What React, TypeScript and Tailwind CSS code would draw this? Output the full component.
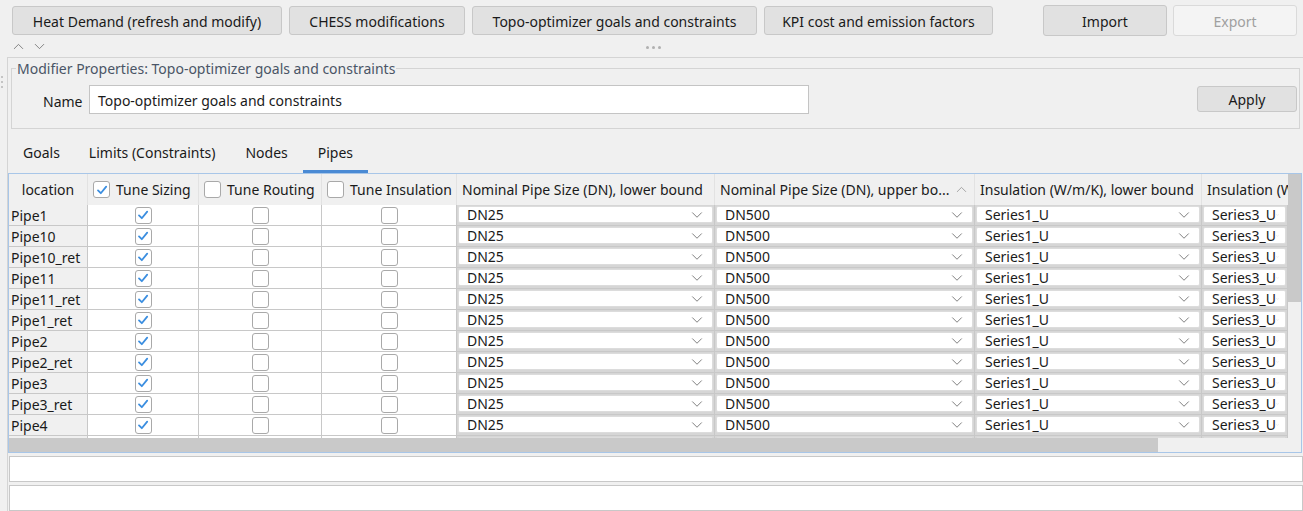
import { ChevronDown, ChevronUp } from 'lucide-react'

const pipes = [
  'Pipe1',
  'Pipe10',
  'Pipe10_ret',
  'Pipe11',
  'Pipe11_ret',
  'Pipe1_ret',
  'Pipe2',
  'Pipe2_ret',
  'Pipe3',
  'Pipe3_ret',
  'Pipe4',
  '',
]

function Check({ checked }: { checked?: boolean }) {
  return (
    <div className="w-[17px] h-[17px] rounded-[3px] border border-[#a9a9a9] bg-white flex items-center justify-center">
      {checked && (
        <svg width="12" height="12" viewBox="0 0 12 12">
          <path d="M2 6.4 L4.8 9.2 L10.2 2.6" fill="none" stroke="#3b8ee0" strokeWidth="1.8" strokeLinecap="round" strokeLinejoin="round" />
        </svg>
      )}
    </div>
  )
}

function Combo({ value, w }: { value: string; w: string }) {
  return (
    <div className={`${w} shrink-0 h-[21px] border-r border-b border-[#c8c8c8] bg-[#d6d6d6] p-[1px] pb-[2px]`}>
      <div className="h-full bg-white rounded-[2px] border border-[#dcdcdc] flex items-center pl-[8px] pr-[6px]">
        <span className="flex-1 leading-none pt-[1px]">{value}</span>
        <ChevronDown size={18} strokeWidth={1} className="text-[#555]" />
      </div>
    </div>
  )
}

function TopButton({ label, w, disabled }: { label: string; w: string; disabled?: boolean }) {
  return (
    <button
      type="button"
      className={`${w} h-[29px] pt-[1px] rounded-[3px] border ${
        disabled ? 'border-[#dadada] bg-[#f4f4f4] text-[#a0a0a0]' : 'border-[#c8c8c8] bg-[#e1e1e1] text-[#1a1a1a]'
      }`}
    >
      {label}
    </button>
  )
}

export default function App() {
  return (
    <div className="w-[1303px] h-[511px] overflow-hidden bg-[#f0f0f0] text-[#1a1a1a] font-['Noto_Sans',sans-serif] text-[14px] relative">
      <div className="flex items-start pt-[6px] pl-[12px]">
        <div className="flex gap-[7px]">
          <TopButton label="Heat Demand (refresh and modify)" w="w-[270px]" />
          <TopButton label="CHESS modifications" w="w-[176px]" />
          <TopButton label="Topo-optimizer goals and constraints" w="w-[285px]" />
          <TopButton label="KPI cost and emission factors" w="w-[229px]" />
        </div>
        <div className="flex gap-[6px] ml-[50px] -mt-[1px]">
          <TopButton label="Import" w="w-[124px] !h-[31px]" />
          <TopButton label="Export" w="w-[124px] !h-[31px]" disabled />
        </div>
      </div>

      <div className="h-[21px] flex items-center relative">
        <div className="flex gap-[4px] pl-[10px] text-[#666]">
          <ChevronUp size={17} strokeWidth={1.1} />
          <ChevronDown size={17} strokeWidth={1.1} />
        </div>
        <div className="absolute left-[646px] top-[10px] flex gap-[3px]">
          <span className="w-[3px] h-[3px] rounded-full bg-[#b0b0b0]" />
          <span className="w-[3px] h-[3px] rounded-full bg-[#b0b0b0]" />
          <span className="w-[3px] h-[3px] rounded-full bg-[#b0b0b0]" />
        </div>
      </div>

      <div className="absolute left-[1px] top-[76px] flex flex-col gap-[3px]">
        <span className="w-[2px] h-[2px] bg-[#c4c4c4]" />
        <span className="w-[2px] h-[2px] bg-[#c4c4c4]" />
        <span className="w-[2px] h-[2px] bg-[#c4c4c4]" />
      </div>

      <div className="ml-[7px] border-t border-l border-[#d4d4d4] h-[460px] pt-[10px]">
        <div className="relative ml-[3px] mr-[3px] h-[61px] border border-[#d4d4d4]">
          <div className="absolute -top-[9px] left-[4px] px-[1px] bg-[#f0f0f0] text-[#4a5566] leading-[18px]">
            Modifier Properties: Topo-optimizer goals and constraints
          </div>
          <div className="flex items-center pt-[18px] pl-[31px]">
            <span className="w-[46px] pt-[1px]">Name</span>
            <div className="w-[720px] h-[29px] bg-white border border-[#c4c4c4] flex items-center pl-[8px] pt-[1px] -mt-[2px]">
              Topo-optimizer goals and constraints
            </div>
            <button
              type="button"
              className="ml-auto mr-[2px] w-[100px] h-[26px] pt-[1px] rounded-[3px] border border-[#c8c8c8] bg-[#e1e1e1] -mt-[4px]"
            >
              Apply
            </button>
          </div>
        </div>

        <div className="flex h-[44px] items-center pl-[1px] pt-[3px]">
          <div className="px-[14px] h-full flex items-center">Goals</div>
          <div className="px-[15px] h-full flex items-center">Limits (Constraints)</div>
          <div className="px-[15px] h-full flex items-center">Nodes</div>
          <div className="px-[15px] h-full flex items-center border-b-[3px] border-[#4a8ad4] pt-[3px]">Pipes</div>
        </div>

        <div className="w-[1294px] h-[280px] border border-[#a8c6e8] flex overflow-hidden">
          <div className="w-[1279px] flex flex-col overflow-hidden">
            <div className="flex h-[31px] shrink-0 bg-[#f0f0f0] whitespace-nowrap">
              <div className="w-[79px] shrink-0 flex items-center justify-center border-r border-[#e2e2e2]">location</div>
              <div className="w-[111px] shrink-0 flex items-center gap-[6px] pl-[5px] border-r border-[#e2e2e2]">
                <Check checked />
                Tune Sizing
              </div>
              <div className="w-[123px] shrink-0 flex items-center gap-[6px] pl-[5px] border-r border-[#e2e2e2]">
                <Check />
                Tune Routing
              </div>
              <div className="w-[135px] shrink-0 flex items-center gap-[6px] pl-[5px] border-r border-[#e2e2e2]">
                <Check />
                Tune Insulation
              </div>
              <div className="w-[258px] shrink-0 flex items-center pl-[5px] border-r border-[#e2e2e2]">
                Nominal Pipe Size (DN), lower bound
              </div>
              <div className="w-[260px] shrink-0 flex items-center pl-[5px] pr-[4px] border-r border-[#e2e2e2]">
                <span className="flex-1">Nominal Pipe Size (DN), upper bo...</span>
                <ChevronUp size={17} strokeWidth={1} className="text-[#888]" />
              </div>
              <div className="w-[227px] shrink-0 flex items-center pl-[5px] border-r border-[#e2e2e2]">
                Insulation (W/m/K), lower bound
              </div>
              <div className="w-[86px] shrink-0 flex items-center pl-[5px] overflow-hidden">Insulation (W</div>
            </div>

            <div className="h-[233px] overflow-hidden bg-white">
              {pipes.map((p, i) => (
                <div key={i} className="flex h-[21px] whitespace-nowrap">
                  <div className="w-[79px] shrink-0 bg-[#f0f0f0] border-r border-b border-[#c8c8c8] pl-[2px] leading-[21px]">{p}</div>
                  <div className="w-[111px] shrink-0 border-r border-b border-[#c8c8c8] flex items-center justify-center">
                    <Check checked />
                  </div>
                  <div className="w-[123px] shrink-0 border-r border-b border-[#c8c8c8] flex items-center justify-center">
                    <Check />
                  </div>
                  <div className="w-[135px] shrink-0 border-r border-b border-[#c8c8c8] flex items-center justify-center">
                    <Check />
                  </div>
                  <Combo value={p ? 'DN25' : ''} w="w-[258px]" />
                  <Combo value={p ? 'DN500' : ''} w="w-[260px]" />
                  <Combo value={p ? 'Series1_U' : ''} w="w-[227px]" />
                  <Combo value={p ? 'Series3_U' : ''} w="w-[86px]" />
                </div>
              ))}
            </div>

            <div className="h-[14px] shrink-0 bg-[#f0f0f0] flex">
              <div className="w-[1149px] bg-[#c9c9c9]" />
            </div>
          </div>
          <div className="w-[13px] flex flex-col bg-[#f0f0f0]">
            <div className="h-[128px] bg-[#c9c9c9]" />
          </div>
        </div>

        <div className="mt-[3px] ml-[1px] w-[1294px] h-[26px] bg-white border border-[#c8c8c8]" />
        <div className="mt-[3px] ml-[1px] w-[1294px] h-[26px] bg-white border border-[#c8c8c8]" />
      </div>
    </div>
  )
}
